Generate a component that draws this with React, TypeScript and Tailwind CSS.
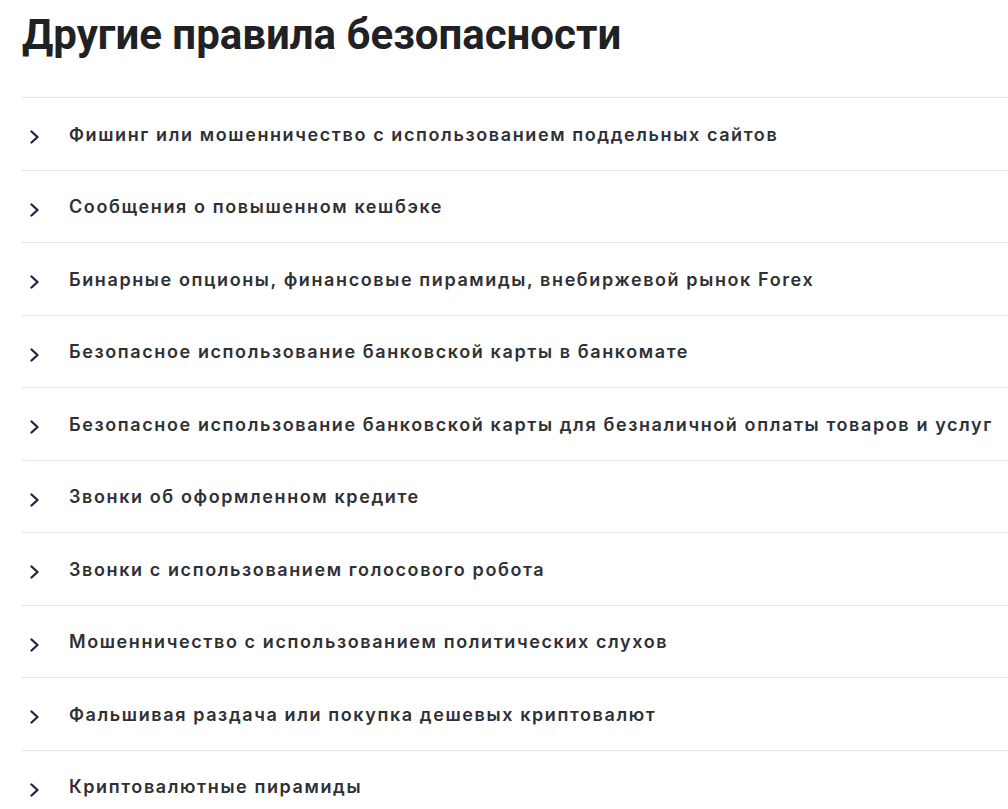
const items = [
  "Фишинг или мошенничество с использованием поддельных сайтов",
  "Сообщения о повышенном кешбэке",
  "Бинарные опционы, финансовые пирамиды, внебиржевой рынок Forex",
  "Безопасное использование банковской карты в банкомате",
  "Безопасное использование банковской карты для безналичной оплаты товаров и услуг",
  "Звонки об оформленном кредите",
  "Звонки с использованием голосового робота",
  "Мошенничество с использованием политических слухов",
  "Фальшивая раздача или покупка дешевых криптовалют",
  "Криптовалютные пирамиды",
];

function Chevron() {
  return (
    <svg width="12" height="14" viewBox="0 0 12 14" fill="none" className="mt-[7px] shrink-0">
      <path d="M2.5 1.5l6 5.5-6 5.5" stroke="#1b2640" strokeWidth="2.3" strokeLinecap="round" strokeLinejoin="round" />
    </svg>
  );
}

export default function App() {
  return (
    <div className="min-h-screen bg-white pl-[22px] overflow-hidden">
      <h1 className="pt-[11px] text-[42px] leading-[48px] font-bold text-[#1f2125] font-['Roboto',sans-serif]">
        Другие правила безопасности
      </h1>
      <div className="mt-[38px] border-t border-[#e3e5ea]">
        {items.map((t) => (
          <div
            key={t}
            className="flex h-[72.5px] items-center gap-[28px] border-b border-[#e3e5ea] pl-[7px] whitespace-nowrap"
          >
            <Chevron />
            <span className="pt-[1px] text-[18px] font-semibold tracking-[1.6px] text-[#2e3035] font-['Inter',sans-serif]">
              {t}
            </span>
          </div>
        ))}
      </div>
    </div>
  );
}
